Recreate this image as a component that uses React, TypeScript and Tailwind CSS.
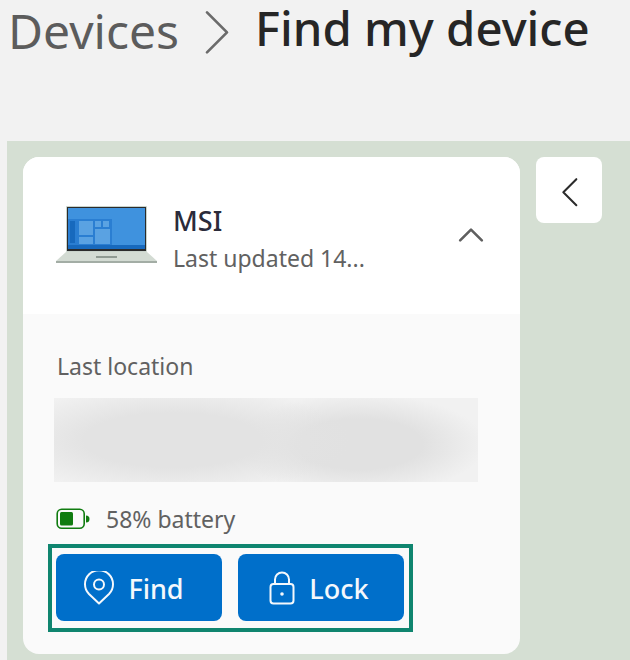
const font = 'font-["Noto_Sans","Open_Sans",sans-serif]';

function Laptop() {
  return (
    <svg width="102" height="60" viewBox="0 0 102 60" className="mt-[1px] shrink-0">
      <rect x="10" y="0" width="81" height="46" rx="1" fill="#c9d3cb" />
      <rect x="11" y="1" width="79" height="44" fill="#2b2b2b" />
      <rect x="12" y="2" width="77" height="41" fill="#3f92de" />
      <rect x="12" y="13" width="44" height="26" fill="#2a7ed2" />
      <rect x="12" y="39" width="77" height="4" fill="#1769bd" />
      <rect x="14" y="15" width="5" height="22" fill="#1769bd" />
      <rect x="23" y="15" width="14" height="14" fill="#5aa2e2" />
      <rect x="39" y="15" width="6" height="6" fill="#5aa2e2" />
      <rect x="47" y="15" width="6" height="6" fill="#5aa2e2" />
      <rect x="39" y="23" width="15" height="15" fill="#5aa2e2" />
      <rect x="23" y="31" width="14" height="7" fill="#5aa2e2" />
      <path d="M10 46h81l10 9H0z" fill="#d3dbd3" />
      <rect x="0" y="55" width="101" height="2" fill="#a3ada5" />
      <rect x="40" y="50" width="21" height="2" fill="#8f9a92" />
    </svg>
  );
}

function Chevron({ d, size, stroke, width }: { d: string; size: number; stroke: string; width: number }) {
  return (
    <svg width={size} height={size} viewBox="0 0 24 24" fill="none" stroke={stroke} strokeWidth={width} strokeLinecap="round" strokeLinejoin="round" overflow="visible">
      <path d={d} />
    </svg>
  );
}

function ActionButton({ label, icon, className }: { label: string; icon: React.ReactNode; className: string }) {
  return (
    <button className={`flex h-[67px] w-[166px] items-center justify-center gap-[14px] rounded-lg bg-[#006fca] text-[27px] font-medium text-[#f4f8fc] ${className}`}>
      {icon}
      <span className="mt-[3px]">{label}</span>
    </button>
  );
}

export default function App() {
  return (
    <div className={`flex h-[660px] w-[630px] flex-col overflow-hidden bg-[#f2f2f2] ${font}`}>
      {/* Breadcrumb */}
      <div className="flex h-[141px] shrink-0 items-start pl-[8px]">
        <span className="mt-[3px] text-[48px] leading-[56px] text-[#5c5c5c]">Devices</span>
        <span className="ml-[24px] mt-[11px]">
          <Chevron d="M3 1l15 15L3 31" size={32} stroke="#6b6b6b" width={2} />
        </span>
        <span className="ml-[20px] text-[47.3px] font-medium leading-[56px] text-[#262626]">Find my device</span>
      </div>

      <div className="ml-[7px] flex flex-1 items-start gap-[16px] bg-[#d5dfd3] pl-[16px] pt-[16px]">
        {/* Device card */}
        <div className="h-[497px] w-[497px] shrink-0 overflow-hidden rounded-[16px] bg-[#fafafa]">
          <div className="flex h-[157px] items-center bg-white pl-[33px]">
            <Laptop />
            <div className="ml-[15px] mt-[7px] flex flex-col">
              <span className="text-[27px] font-medium leading-[34px] text-[#2b2b3a]">MSI</span>
              <span className="mt-[3px] text-[23px] leading-[34px] text-[#616161]">Last updated 14...</span>
            </div>
            <span className="ml-auto mr-[36px] mt-[-2px]">
              <Chevron d="M2 17L12 7l10 10" size={26} stroke="#5f5f5f" width={2.4} />
            </span>
          </div>

          <div className="pl-[25px] pt-[35px]">
            <div className="pl-[9px] text-[23px] leading-[34px] text-[#616161]">Last location</div>
            {/* Blurred out address */}
            <div className="ml-[6px] mt-[15px] h-[84px] w-[424px] bg-[#f1f1f1] bg-[radial-gradient(ellipse_42%_65%_at_28%_50%,#e3e3e3_50%,transparent),radial-gradient(ellipse_30%_60%_at_72%_55%,#e1e1e1_50%,transparent)]" />
            <div className="mt-[20px] flex items-center pl-[8px]">
              <svg width="36" height="24" viewBox="0 0 36 24" fill="none">
                <rect x="1.2" y="2.2" width="27" height="19" rx="4.5" stroke="#107c10" strokeWidth="1.6" />
                <rect x="4" y="5" width="13" height="13.5" rx="1.5" fill="#107c10" />
                <path d="M30 8.5a3.5 3.5 0 010 7z" fill="#107c10" />
              </svg>
              <span className="ml-[14px] text-[23px] leading-[34px] text-[#616161]">58% battery</span>
            </div>

            {/* Highlighted actions */}
            <div className="mt-[8px] flex h-[88px] w-[365px] gap-[16px] border-[4px] border-[#0f856f] px-[4px] pt-[6px]">
              <ActionButton
                label="Find"
                className="pr-[10px]"
                icon={
                  <svg width="30" height="34" viewBox="0 0 30 34" fill="none" stroke="#f4f8fc" strokeWidth="2">
                    <path d="M15 32.5L5 23a14 14 0 1120 0z" strokeLinejoin="round" />
                    <circle cx="15" cy="13.5" r="5" />
                  </svg>
                }
              />
              <ActionButton
                label="Lock"
                className="pr-[4px]"
                icon={
                  <svg width="26" height="34" viewBox="0 0 26 34" fill="none" stroke="#f4f8fc" strokeWidth="2">
                    <rect x="1.5" y="13" width="23" height="19.5" rx="3" />
                    <path d="M6 13V8.5a7 7 0 0114 0V13" />
                    <circle cx="13" cy="23" r="1.8" fill="#f4f8fc" stroke="none" />
                  </svg>
                }
              />
            </div>
          </div>
        </div>

        {/* Collapse panel */}
        <button className="flex h-[66px] w-[66px] shrink-0 items-center justify-center rounded-lg bg-white">
          <span className="ml-[5px]">
            <Chevron d="M16 2L4 14l12 12" size={26} stroke="#2b2b2b" width={1.9} />
          </span>
        </button>
      </div>
    </div>
  );
}
